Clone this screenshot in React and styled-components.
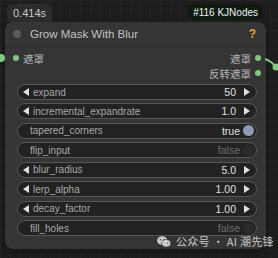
import React from "react";
import styled, { createGlobalStyle } from "styled-components";

const Global = createGlobalStyle`
  html, body {
    margin: 0;
    padding: 0;
    background: #1d1d1d;
  }
`;

const Canvas = styled.div`
  position: relative;
  width: 278px;
  height: 258px;
  overflow: hidden;
  box-sizing: border-box;
  padding: 4px 12px 0 5px;
  font-family: "Liberation Sans", Arial, "Noto Sans CJK SC", sans-serif;
  background-color: #1d1d1d;
  background-image: linear-gradient(#242424 1px, transparent 1px),
    linear-gradient(90deg, #242424 1px, transparent 1px);
  background-size: 10px 10px;
`;

const TopRow = styled.div`
  display: flex;
  justify-content: space-between;
  align-items: flex-end;
  height: 18px;
`;

const TimeBadge = styled.div`
  margin-left: 2px;
  height: 18px;
  padding: 0 6px;
  box-sizing: border-box;
  display: flex;
  align-items: center;
  background: #2c2c2c;
  border-radius: 6px 6px 0 0;
  color: #c8c8c8;
  font-size: 11px;
`;

const PackBadge = styled.div`
  align-self: flex-start;
  margin-right: 3px;
  height: 16px;
  padding: 0 5px;
  display: flex;
  align-items: center;
  background: #0f1a10;
  border-radius: 5px;
  color: #f0f0f0;
  font-size: 10px;
`;

const Node = styled.div`
  width: 261px;
  height: 227px;
  box-sizing: border-box;
  background: #353535;
  border-radius: 8px;
  box-shadow: 0 2px 6px rgba(0, 0, 0, 0.5);
  display: flex;
  flex-direction: column;
`;

const TitleBar = styled.div`
  height: 24px;
  display: flex;
  align-items: center;
  padding: 0 10px 0 8px;
  border-bottom: 1px solid #2a2a2a;
  color: #c4c4c4;
  font-size: 11.5px;
`;

const TitleDot = styled.span`
  width: 8px;
  height: 8px;
  border-radius: 50%;
  background: #5a5a5a;
  margin-right: 9px;
`;

const Help = styled.span`
  margin-left: auto;
  color: #e8a32a;
  font-weight: bold;
  font-size: 12px;
`;

const Slots = styled.div`
  display: flex;
  justify-content: space-between;
  box-sizing: border-box;
  padding: 5px 5px 0 8px;
  height: 37px;
`;

const SlotCol = styled.div`
  display: flex;
  flex-direction: column;
  align-items: ${(p) => (p.$right ? "flex-end" : "flex-start")};
  gap: 3px;
`;

const Slot = styled.div`
  display: flex;
  align-items: center;
  flex-direction: ${(p) => (p.$right ? "row-reverse" : "row")};
  height: 12px;
  color: #b8b8b8;
  font-size: 10.5px;
  gap: 4px;
`;

const Dot = styled.span`
  width: 6px;
  height: 6px;
  border-radius: 50%;
  background: #7dcb7d;
`;

const Widgets = styled.div`
  display: flex;
  flex-direction: column;
  gap: 3.45px;
  padding: 0 9px 0 12px;
`;

const Widget = styled.div`
  height: 16px;
  box-sizing: border-box;
  border: 1px solid #575757;
  border-radius: 8px;
  background: #222222;
  display: flex;
  align-items: center;
  padding: 0 6px 0 5px;
  font-size: 10px;
  color: #a8a8a8;
`;

const Arrow = styled.span`
  width: 0;
  height: 0;
  border-top: 4px solid transparent;
  border-bottom: 4px solid transparent;
  ${(p) =>
    p.$right
      ? "border-left: 6px solid #e0e0e0; margin-left: 8px;"
      : "border-right: 6px solid #e0e0e0; margin-right: 4px;"}
`;

const Label = styled.span`
  padding-left: ${(p) => (p.$plain ? "7px" : "0")};
`;

const Value = styled.span`
  margin-left: auto;
  font-size: 10.5px;
  color: ${(p) => (p.$off ? "#6e6e6e" : "#e0e0e0")};
`;

const Knob = styled.span`
  width: 11px;
  height: 11px;
  border-radius: 50%;
  margin-left: 3px;
  margin-right: -4px;
  background: ${(p) => (p.$on ? "#8d9ab3" : "#2b2b2b")};
`;

const LinkEnd = styled.span`
  position: absolute;
  left: -3px;
  top: 54px;
  width: 8px;
  height: 8px;
  border-radius: 50%;
  background: #7dcb7d;
`;

const Watermark = styled.div`
  position: absolute;
  left: 156px;
  top: 235px;
  display: flex;
  align-items: center;
  gap: 4px;
  white-space: nowrap;
  color: rgba(235, 235, 235, 0.82);
  font-size: 11px;
  line-height: 13px;
  letter-spacing: 0.3px;
  font-family: "Noto Sans CJK SC", "Liberation Sans", sans-serif;
`;

const numeric = [
  ["expand", "50"],
  ["incremental_expandrate", "1.0"],
];

function NumberWidget({ name, value }) {
  return (
    <Widget>
      <Arrow />
      <Label>{name}</Label>
      <Value>{value}</Value>
      <Arrow $right />
    </Widget>
  );
}

function ToggleWidget({ name, on }) {
  return (
    <Widget>
      <Label $plain>{name}</Label>
      <Value $off={!on}>{on ? "true" : "false"}</Value>
      <Knob $on={on} />
    </Widget>
  );
}

export default function App() {
  return (
    <>
      <Global />
      <Canvas>
        <TopRow>
          <TimeBadge>0.414s</TimeBadge>
          <PackBadge>#116 KJNodes</PackBadge>
        </TopRow>
        <Node>
          <TitleBar>
            <TitleDot />
            Grow Mask With Blur
            <Help>?</Help>
          </TitleBar>
          <Slots>
            <SlotCol>
              <Slot>
                <Dot />
                遮罩
              </Slot>
            </SlotCol>
            <SlotCol $right>
              <Slot $right>
                <Dot />
                遮罩
              </Slot>
              <Slot $right>
                <Dot />
                反转遮罩
              </Slot>
            </SlotCol>
          </Slots>
          <Widgets>
            {numeric.map(([n, v]) => (
              <NumberWidget key={n} name={n} value={v} />
            ))}
            <ToggleWidget name="tapered_corners" on />
            <ToggleWidget name="flip_input" on={false} />
            <NumberWidget name="blur_radius" value="5.0" />
            <NumberWidget name="lerp_alpha" value="1.00" />
            <NumberWidget name="decay_factor" value="1.00" />
            <ToggleWidget name="fill_holes" on={false} />
          </Widgets>
        </Node>
        <LinkEnd />
        <svg
          width="14"
          height="14"
          viewBox="0 0 14 14"
          style={{ position: "absolute", left: 265, top: 58 }}
        >
          <path d="M0 1 Q6 3 10 8" stroke="#7dcb7d" strokeWidth="2" fill="none" />
          <circle cx="11" cy="9" r="3.5" fill="#7dcb7d" />
        </svg>
        <Watermark>
          <svg width="16" height="13" viewBox="0 0 16 14">
            <ellipse cx="6" cy="6" rx="5.5" ry="4.6" fill="rgba(235,235,235,0.82)" />
            <ellipse cx="10.5" cy="9" rx="4.8" ry="4" fill="rgba(235,235,235,0.82)" stroke="#353535" strokeWidth="0.8" />
            <circle cx="4" cy="5" r="0.8" fill="#353535" />
            <circle cx="8" cy="5" r="0.8" fill="#353535" />
            <circle cx="9" cy="8.5" r="0.6" fill="#353535" />
            <circle cx="12" cy="8.5" r="0.6" fill="#353535" />
          </svg>
          公众号 · AI 潮先锋
        </Watermark>
      </Canvas>
    </>
  );
}
